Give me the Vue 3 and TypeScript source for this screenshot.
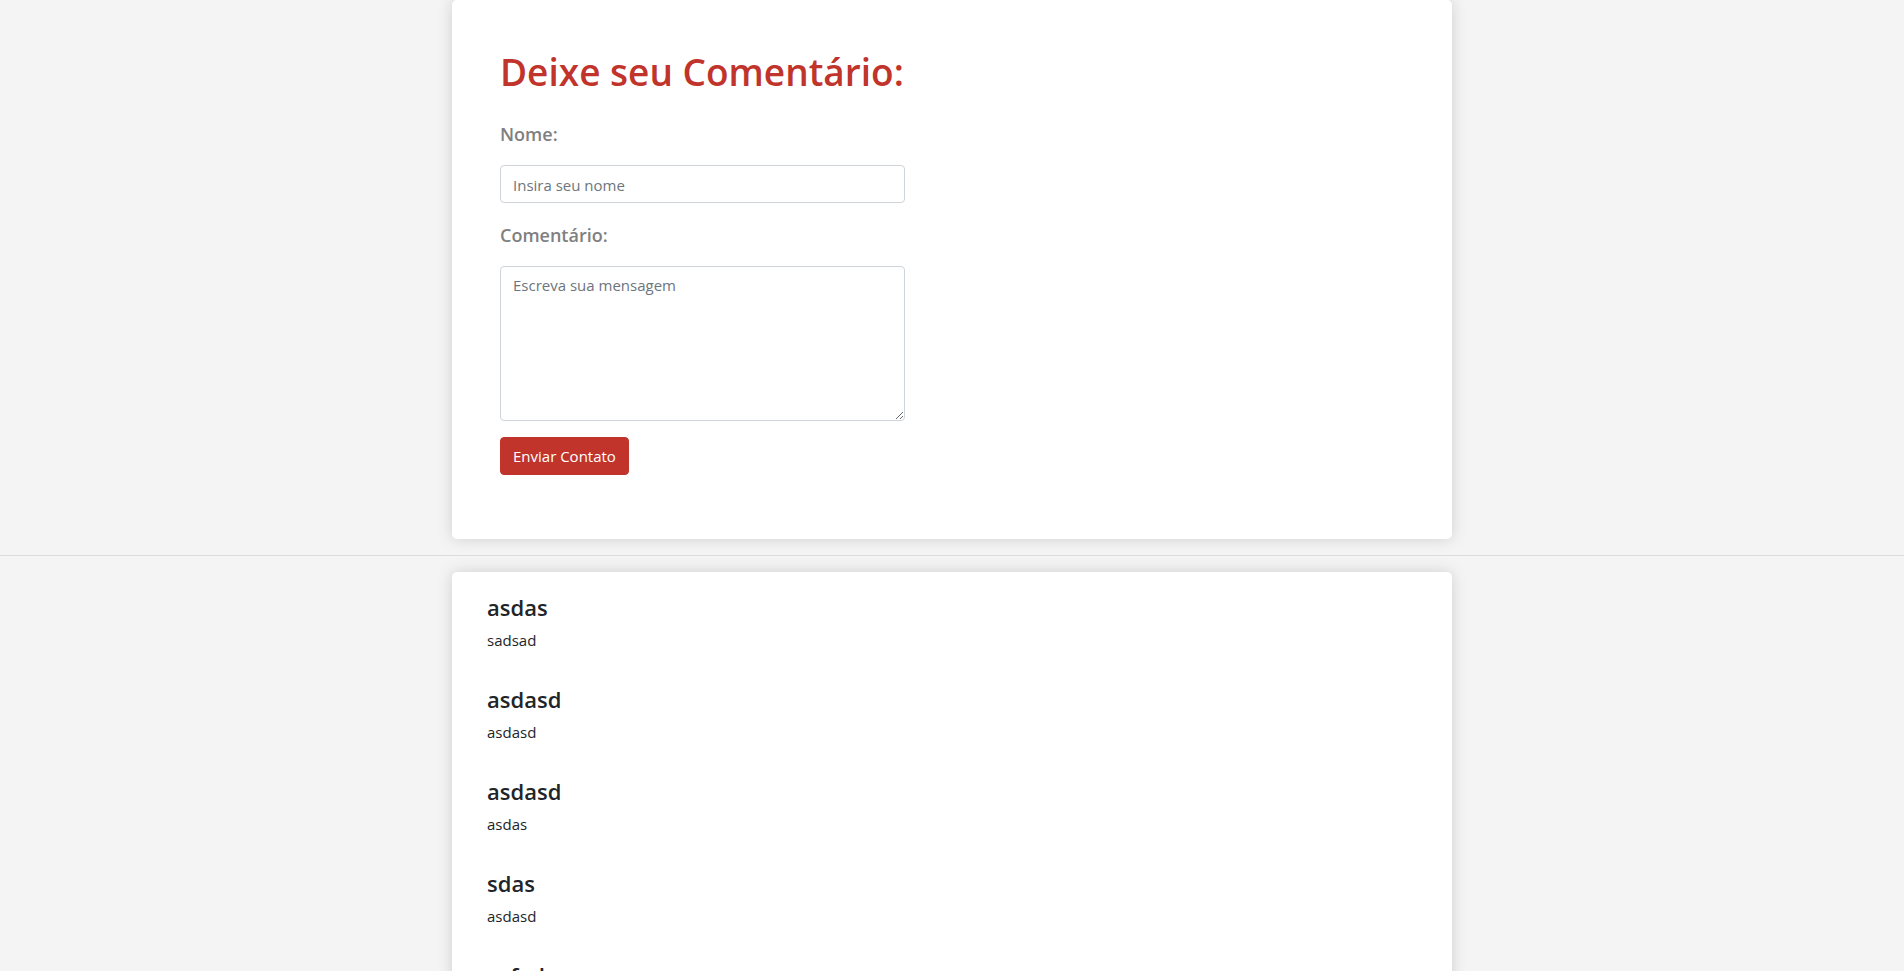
<script setup lang="ts">
interface Comment { name: string; text: string }
const comments: Comment[] = [
  { name: 'asdas', text: 'sadsad' },
  { name: 'asdasd', text: 'asdasd' },
  { name: 'asdasd', text: 'asdas' },
  { name: 'sdas', text: 'asdasd' },
  { name: 'asfad', text: 'asdasd' },
]
</script>

<template>
  <main class="page">
    <section class="card form-card">
      <form class="form" @submit.prevent>
        <h1>Deixe seu Comentário:</h1>
        <label for="name">Nome:</label>
        <input id="name" type="text" placeholder="Insira seu nome">
        <label for="message">Comentário:</label>
        <textarea id="message" rows="6" placeholder="Escreva sua mensagem"></textarea>
        <button type="submit">Enviar Contato</button>
      </form>
    </section>
    <hr>
    <section class="card list-card">
      <article v-for="(c, i) in comments" :key="i">
        <h2>{{ c.name }}</h2>
        <p>{{ c.text }}</p>
      </article>
    </section>
  </main>
</template>

<style>
html, body { overflow: hidden; }
</style>

<style scoped>
.page, .page * { box-sizing: border-box; }
.page {
  height: 100vh;
  overflow: hidden;
  background: #f4f4f4;
  color: #212529;
  font-family: "Segoe UI", "Open Sans", "Noto Sans", sans-serif;
  font-size: 15px;
  line-height: 24px;
}
.card {
  max-width: 1000px;
  margin: 0 auto;
  background: #fff;
  border-radius: 5px;
  box-shadow: 0 0 15px rgba(0, 0, 0, 0.15);
}
.form-card { padding: 48px 48px 64px; }
.form { display: flex; flex-direction: column; align-items: flex-start; max-width: 405px; }
h1 { margin: 0 0 24px; color: #c0342b; font-size: 37px; line-height: 48px; font-weight: 600; white-space: nowrap; }
label { margin-bottom: 17px; color: #808080; font-size: 18px; line-height: 28px; font-weight: 600; }
input, textarea {
  width: 100%;
  margin: 0 0 18px;
  padding: 7px 12px 5px;
  border: 1px solid #ced4da;
  border-radius: 4px;
  background: #fff;
  font: inherit;
}
textarea { height: 155px; margin-bottom: 16px; padding: 6px 12px; }
input::placeholder, textarea::placeholder { color: #6c757d; opacity: 1; }
button { padding: 6px 12px; border: 1px solid #c0342b; border-radius: 4px; background: #c0342b; color: #fff; font: inherit; }
hr { margin: 16px 0; border: 0; border-top: 1px solid #dcdcdc; }
.list-card { padding: 20px 35px; }
article { margin-bottom: 32px; }
h2 { margin: 0 0 6px; font-size: 22px; line-height: 30px; font-weight: 600; }
p { margin: 0; }
</style>
